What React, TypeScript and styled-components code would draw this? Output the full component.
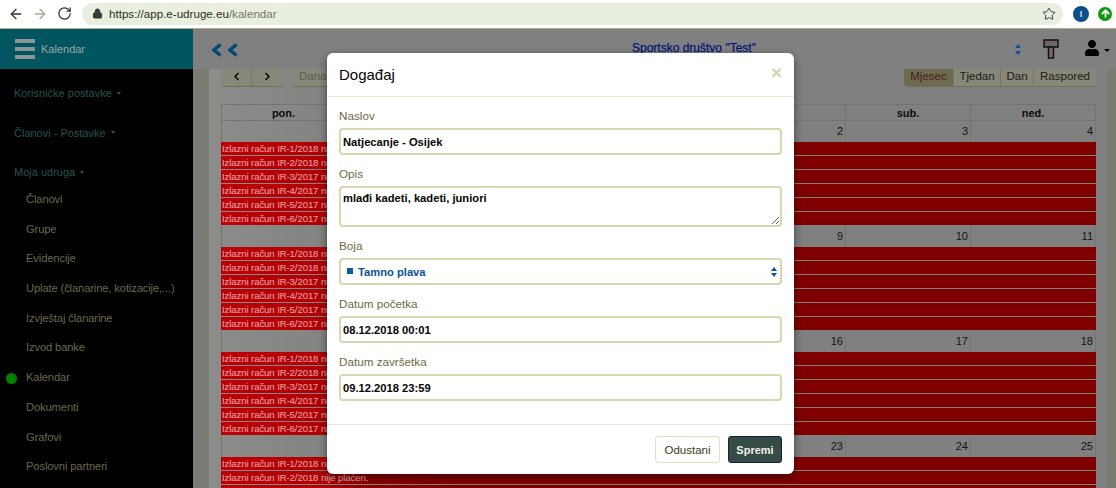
import React from 'react';
import styled, { createGlobalStyle } from 'styled-components';
import { ArrowLeft, ArrowRight, RotateCw, Star, Lock, ArrowUp } from 'lucide-react';
import { FaChevronLeft, FaChevronRight, FaUser } from 'react-icons/fa';

const Global = createGlobalStyle`
  html, body { margin: 0; padding: 0; background: #808080; }
  * { box-sizing: border-box; }
`;

const Page = styled.div`
  position: relative;
  width: 1116px;
  height: 488px;
  overflow: hidden;
  display: flex;
  flex-direction: column;
  font-family: "Liberation Sans", Arial, sans-serif;
`;

const BrowserBar = styled.div`
  height: 29px;
  flex: none;
  background: #fff;
  border-bottom: 1px solid #b5ab8e;
  display: flex;
  align-items: center;
  padding: 0 3px 1px 8px;
`;
const NavIcon = styled.span<{ $c: string; $mr: number }>`
  display: flex;
  width: 16px;
  margin-right: ${p => p.$mr}px;
  color: ${p => p.$c};
`;
const UrlPill = styled.div`
  width: 981px;
  height: 22px;
  margin-left: 1px;
  border-radius: 11px;
  background: #e9efdf;
  display: flex;
  align-items: center;
  padding: 0 7px 0 10px;
  font-size: 11.6px;
  color: #2c3022;
`;
const LockIcon = styled.span`
  display: flex;
  color: #3a3a34;
  margin-right: 6px;
`;
const UrlPath = styled.span`
  color: #75786a;
`;
const StarIcon = styled.span`
  display: flex;
  margin-left: auto;
  color: #333;
`;
const ExtBlue = styled.div`
  width: 16px;
  height: 16px;
  margin-left: 10px;
  border-radius: 50%;
  background: #0d4f8b;
  color: #cfe0ef;
  font-size: 9px;
  font-weight: 700;
  display: flex;
  align-items: center;
  justify-content: center;
`;
const ExtGreen = styled.div`
  width: 14px;
  height: 14px;
  margin-left: 9px;
  border-radius: 50%;
  background: #119611;
  color: #fff;
  display: flex;
  align-items: center;
  justify-content: center;
`;

const Body = styled.div`
  flex: 1;
  min-height: 0;
  display: flex;
`;

const Sidebar = styled.aside`
  width: 193px;
  flex: none;
  background: #000;
  display: flex;
  flex-direction: column;
`;
const SideHead = styled.div`
  height: 40px;
  background: #005561;
  display: flex;
  align-items: center;
  padding-left: 15px;
  gap: 6px;
  color: #9aa6a6;
  font-size: 11px;
`;
const Burger = styled.div`
  width: 20px;
  display: flex;
  flex-direction: column;
  gap: 4px;
`;
const BurgerBar = styled.div`
  height: 4px;
  background: #8b9595;
`;
const SideNav = styled.nav`
  padding-top: 14px;
  display: flex;
  flex-direction: column;
`;
const SectionTitle = styled.div<{ $mb: number }>`
  height: 20px;
  line-height: 20px;
  margin-bottom: ${p => p.$mb}px;
  padding-left: 14px;
  font-size: 11px;
  color: #24524f;
  display: flex;
  align-items: center;
  gap: 5px;
  &::after {
    content: "";
    border-top: 3px solid #3c4a48;
    border-left: 2.5px solid transparent;
    border-right: 2.5px solid transparent;
  }
`;
const SideItem = styled.div<{ $active?: boolean }>`
  position: relative;
  height: 29.7px;
  line-height: 29.7px;
  padding-left: 26px;
  font-size: 11.2px;
  letter-spacing: -0.13px;
  color: #6b674d;
  white-space: nowrap;
  &::before {
    content: "";
    display: ${p => (p.$active ? 'block' : 'none')};
    position: absolute;
    left: 6px;
    top: 10px;
    width: 11px;
    height: 11px;
    border-radius: 50%;
    background: #008000;
  }
`;

const Main = styled.main`
  flex: 1;
  min-width: 0;
  display: flex;
  flex-direction: column;
`;
const TopBar = styled.div`
  height: 40px;
  flex: none;
  background: #808080;
  display: flex;
  align-items: center;
  position: relative;
  z-index: 1;
  padding: 0 6px 0 18px;
`;
const BackChevrons = styled.div`
  display: flex;
  gap: 5px;
  width: 421px;
  margin-top: 2px;
`;
const OrgTitle = styled.div`
  width: 125px;
  margin-bottom: 2px;
  font-size: 12px;
  -webkit-text-stroke: 0.2px #00127a;
  color: #00127a;
  white-space: nowrap;
`;
const TopRight = styled.div`
  margin-left: auto;
  display: flex;
  align-items: center;
`;
const Spinner = styled.span`
  display: flex;
  margin-right: 22px;
`;
const Roller = styled.span`
  display: flex;
  margin-right: 25px;
`;
const UserIcon = styled.span`
  display: flex;
  align-items: center;
  color: #000;
  font-size: 16px;
  gap: 4px;
  margin-top: -2px;
  &::after {
    content: "";
    margin-top: 5px;
    border-top: 3px solid #000;
    border-left: 3px solid transparent;
    border-right: 3px solid transparent;
  }
`;

const Gutter = styled.div`
  flex: 1;
  min-height: 0;
  background: #797c73;
  padding: 0 9px 0 16px;
  display: flex;
`;
const Panel = styled.div`
  flex: 1;
  min-width: 0;
  background: linear-gradient(90deg, #8c8c8a 0, #838382 120px, #808080 250px);
  padding: 0 11px 0 12px;
`;
const Toolbar = styled.div`
  height: 35px;
  display: flex;
  align-items: flex-start;
`;
const BtnGroup = styled.div<{ $ml?: string }>`
  display: flex;
  height: 18px;
  margin-left: ${p => p.$ml || '0'};
  border-bottom: 1px solid #6f6f58;
  border-radius: 0 0 4px 4px;
  overflow: hidden;
  background: #87877a;
`;
const ToolBtn = styled.div<{ $w: number; $on?: boolean; $arrow?: boolean }>`
  width: ${p => p.$w}px;
  display: flex;
  align-items: center;
  justify-content: center;
  padding-bottom: 3px;
  font-size: 11.5px;
  border-right: 1px solid #777766;
  color: ${p => (p.$on ? '#4a1c1c' : p.$arrow ? '#000' : '#202018')};
  background: ${p => (p.$on ? '#6e6a50' : '#87877a')};
  &:last-child { border-right: 0; }
`;
const DanasBtn = styled(ToolBtn)`
  color: #5e5e50;
  justify-content: flex-start;
  padding-left: 7px;
`;

const Calendar = styled.div`
  width: 875px;
  border-top: 1px solid #757570;
`;
const HeadRow = styled.div`
  display: grid;
  grid-template-columns: repeat(7, 125px);
  height: 16px;
  border-bottom: 1px solid #757570;
`;
const HeadCell = styled.div`
  font-size: 11px;
  font-weight: 700;
  line-height: 16px;
  text-align: center;
  color: #0c0c0c;
  border-right: 1px solid #757570;
  &:first-child { border-left: 1px solid #757570; }
`;
const NumRow = styled.div`
  display: grid;
  grid-template-columns: repeat(7, 125px);
  height: 21px;
`;
const NumCell = styled.div`
  font-size: 11px;
  line-height: 20px;
  text-align: right;
  padding-right: 2px;
  color: #141414;
  border-right: 1px solid #757570;
  &:first-child { border-left: 1px solid #757570; }
`;
const EventRow = styled.div`
  height: 13px;
  margin-bottom: 1px;
  padding-left: 1px;
  font-size: 9.6px;
  letter-spacing: -0.1px;
  line-height: 13px;
  -webkit-text-stroke: 0.15px #e39a9a;
  color: #e39a9a;
  white-space: nowrap;
  overflow: hidden;
  background: linear-gradient(90deg, #bc0006 0, #b00004 100px, #8a0000 150px, #800000 220px);
`;

const Modal = styled.div`
  position: absolute;
  left: 327px;
  top: 53px;
  width: 467px;
  height: 421px;
  background: #fff;
  border-radius: 6px;
  box-shadow: 0 3px 9px rgba(0, 0, 0, 0.5);
  display: flex;
  flex-direction: column;
  z-index: 2;
`;
const ModalHead = styled.div`
  height: 44px;
  flex: none;
  border-bottom: 1px solid #e8e6cf;
  padding: 0 12px;
  display: flex;
  align-items: center;
  justify-content: space-between;
`;
const ModalTitle = styled.div`
  font-size: 15px;
  color: #050505;
`;
const CloseX = styled.div`
  font-size: 19px;
  font-weight: 700;
  color: #d4d2ae;
  margin-top: -4px;
`;
const ModalBody = styled.div`
  padding: 12px 12px 11px;
  display: flex;
  flex-direction: column;
`;
const Field = styled.div`
  margin-bottom: 12px;
`;
const Label = styled.label`
  display: block;
  height: 14px;
  line-height: 14px;
  margin-bottom: 5px;
  font-size: 11.7px;
  color: #6e6a44;
`;
const TextInput = styled.input`
  display: block;
  width: 100%;
  height: 27px;
  padding: 0 2px;
  border: 2px solid #d9d6b0;
  border-radius: 4px;
  outline: none;
  font-family: inherit;
  font-size: 11.2px;
  font-weight: 700;
  color: #050505;
  background: #fff;
`;
const TextArea = styled.textarea`
  display: block;
  width: 100%;
  height: 41px;
  padding: 3px 2px;
  border: 2px solid #d9d6b0;
  border-radius: 4px;
  outline: none;
  font-family: inherit;
  font-size: 11.2px;
  line-height: 14px;
  font-weight: 700;
  color: #050505;
  background: #fff;
`;
const SelectBox = styled.div`
  position: relative;
  height: 27px;
  padding-left: 6px;
  border: 2px solid #d9d6b0;
  border-radius: 4px;
  display: flex;
  align-items: center;
  gap: 5px;
  font-size: 11.2px;
  font-weight: 700;
  color: #0a5296;
`;
const Square = styled.span`
  width: 6px;
  height: 6px;
  margin-bottom: 1px;
  background: #0a5ca8;
`;
const SelectArrows = styled.svg`
  position: absolute;
  right: 3px;
  top: 7px;
`;
const ModalFoot = styled.div`
  height: 51px;
  flex: none;
  border-top: 1px solid #e8e6cf;
  padding: 11px 12px 0;
  display: flex;
  justify-content: flex-end;
  gap: 8px;
`;
const CancelBtn = styled.button`
  width: 65px;
  height: 27px;
  padding: 0;
  border: 1.5px solid #e2e0c4;
  border-radius: 3px;
  background: #fff;
  font-family: inherit;
  font-size: 11.5px;
  color: #3c3a22;
`;
const SaveBtn = styled.button`
  width: 54px;
  height: 27px;
  padding: 0;
  border: 1px solid #10233a;
  border-radius: 3px;
  background: #344b46;
  font-family: inherit;
  font-size: 11px;
  font-weight: 700;
  color: #f2f2ea;
`;

const days = ['pon.', 'uto.', 'sri.', 'čet.', 'pet.', 'sub.', 'ned.'];
const weeks = [
  [29, 30, 31, 1, 2, 3, 4],
  [5, 6, 7, 8, 9, 10, 11],
  [12, 13, 14, 15, 16, 17, 18],
  [19, 20, 21, 22, 23, 24, 25],
];
const events = ['IR-1/2018', 'IR-2/2018', 'IR-3/2017', 'IR-4/2017', 'IR-5/2017', 'IR-6/2017'];
const items = ['Članovi', 'Grupe', 'Evidencije', 'Uplate (članarine, kotizacije,...)', 'Izvještaj članarine', 'Izvod banke', 'Kalendar', 'Dokumenti', 'Grafovi', 'Poslovni partneri'];

const BackChevron = () => (
  <svg width="11" height="14" viewBox="0 0 11 14" fill="none" stroke="#00487a" strokeWidth="3.4">
    <path d="M9.5 1.5L3 7l6.5 5.5" />
  </svg>
);

export default function App() {
  return (
    <Page>
      <Global />
      <BrowserBar>
        <NavIcon $c="#333" $mr={8}><ArrowLeft size={16} strokeWidth={2} /></NavIcon>
        <NavIcon $c="#a9a98a" $mr={9}><ArrowRight size={16} strokeWidth={2} /></NavIcon>
        <NavIcon $c="#333" $mr={8}><RotateCw size={15} strokeWidth={2} /></NavIcon>
        <UrlPill>
          <LockIcon><Lock size={11} fill="#3a3a34" strokeWidth={2} /></LockIcon>
          <span>https://app.e-udruge.eu<UrlPath>/kalendar</UrlPath></span>
          <StarIcon><Star size={14} strokeWidth={1.6} /></StarIcon>
        </UrlPill>
        <ExtBlue>I</ExtBlue>
        <ExtGreen><ArrowUp size={11} strokeWidth={4} /></ExtGreen>
      </BrowserBar>
      <Body>
        <Sidebar>
          <SideHead>
            <Burger><BurgerBar /><BurgerBar /><BurgerBar /></Burger>
            Kalendar
          </SideHead>
          <SideNav>
            <SectionTitle $mb={19.5}>Korisničke postavke</SectionTitle>
            <SectionTitle $mb={19.5}>Članovi - Postavke</SectionTitle>
            <SectionTitle $mb={3}>Moja udruga</SectionTitle>
            {items.map(t => <SideItem key={t} $active={t === 'Kalendar'}>{t}</SideItem>)}
          </SideNav>
        </Sidebar>
        <Main>
          <TopBar>
            <BackChevrons>
              <BackChevron />
              <BackChevron />
            </BackChevrons>
            <OrgTitle>Sportsko društvo "Test"</OrgTitle>
            <TopRight>
              <Spinner>
                <svg width="6" height="11" viewBox="0 0 6 11"><path d="M3 0l3 4H0zM3 11L0 7h6z" fill="#0a4fa0" /></svg>
              </Spinner>
              <Roller>
                <svg width="16" height="20" viewBox="0 0 16 20" fill="none" stroke="#111" strokeWidth="1.5">
                  <rect x="1" y="1" width="14" height="7" fill="#6a6a66" />
                  <path d="M3 3.5h8" stroke="#8a5a58" />
                  <rect x="5.5" y="8" width="5" height="11" fill="#7a6a66" />
                  <path d="M8 12v4" stroke="#8a5a58" />
                </svg>
              </Roller>
              <UserIcon><FaUser /></UserIcon>
            </TopRight>
          </TopBar>
          <Gutter>
            <Panel>
              <Toolbar>
                <BtnGroup>
                  <ToolBtn $w={31} $arrow><FaChevronLeft size={9} /></ToolBtn>
                  <ToolBtn $w={31} $arrow><FaChevronRight size={9} /></ToolBtn>
                </BtnGroup>
                <BtnGroup $ml="9px">
                  <DanasBtn $w={60}>Danas</DanasBtn>
                </BtnGroup>
                <BtnGroup $ml="auto">
                  <ToolBtn $w={50} $on>Mjesec</ToolBtn>
                  <ToolBtn $w={47}>Tjedan</ToolBtn>
                  <ToolBtn $w={33}>Dan</ToolBtn>
                  <ToolBtn $w={62}>Raspored</ToolBtn>
                </BtnGroup>
              </Toolbar>
              <Calendar>
                <HeadRow>
                  {days.map(d => <HeadCell key={d}>{d}</HeadCell>)}
                </HeadRow>
                {weeks.map(w => (
                  <div key={w[0]}>
                    <NumRow>
                      {w.map(n => <NumCell key={n}>{n}</NumCell>)}
                    </NumRow>
                    {events.map(e => <EventRow key={e}>Izlazni račun {e} nije plaćen.</EventRow>)}
                  </div>
                ))}
              </Calendar>
            </Panel>
          </Gutter>
        </Main>
      </Body>
      <Modal>
        <ModalHead>
          <ModalTitle>Događaj</ModalTitle>
          <CloseX>×</CloseX>
        </ModalHead>
        <ModalBody>
          <Field>
            <Label>Naslov</Label>
            <TextInput readOnly defaultValue="Natjecanje - Osijek" />
          </Field>
          <Field>
            <Label>Opis</Label>
            <TextArea readOnly defaultValue="mlađi kadeti, kadeti, juniori" />
          </Field>
          <Field>
            <Label>Boja</Label>
            <SelectBox>
              <Square />
              Tamno plava
              <SelectArrows width="6" height="10" viewBox="0 0 6 10"><path d="M3 0l3 4H0zM3 10L0 6h6z" fill="#0a4fa0" /></SelectArrows>
            </SelectBox>
          </Field>
          <Field>
            <Label>Datum početka</Label>
            <TextInput readOnly defaultValue="08.12.2018 00:01" />
          </Field>
          <Field>
            <Label>Datum završetka</Label>
            <TextInput readOnly defaultValue="09.12.2018 23:59" />
          </Field>
        </ModalBody>
        <ModalFoot>
          <CancelBtn>Odustani</CancelBtn>
          <SaveBtn>Spremi</SaveBtn>
        </ModalFoot>
      </Modal>
    </Page>
  );
}
